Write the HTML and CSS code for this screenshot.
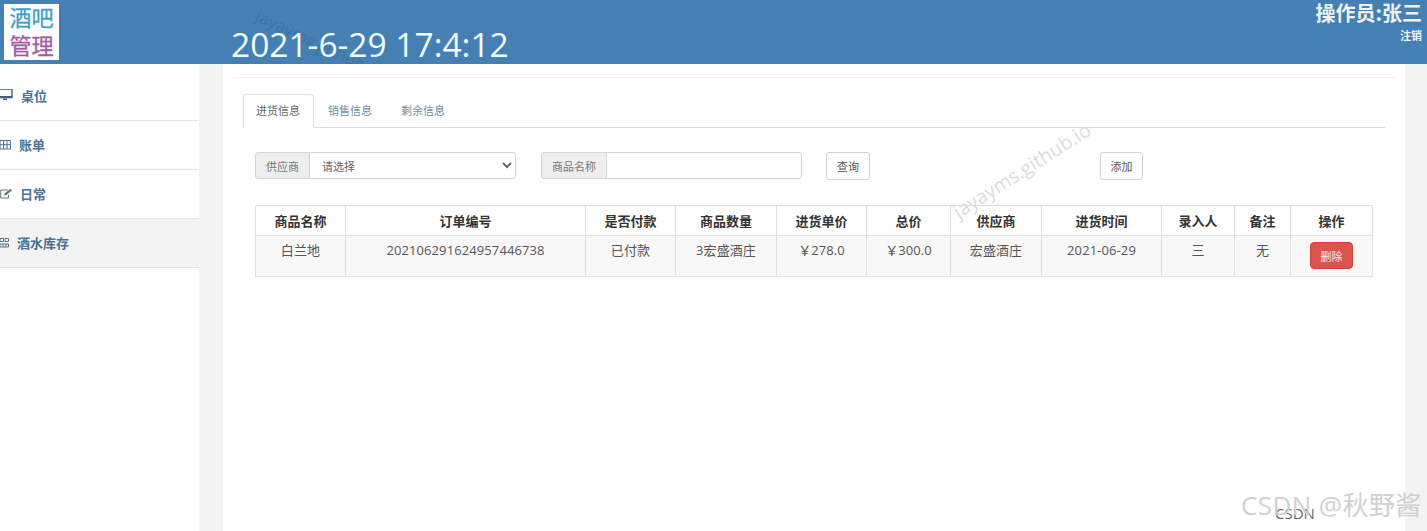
FILE: index.html
```html
<!DOCTYPE html>
<html lang="zh">
<head>
<meta charset="utf-8">
<title>酒吧管理</title>
<link rel="stylesheet" href="styles.css">
</head>
<body>
<header class="topbar">
  <div class="mark mark-top">jayayms.github.io</div>
  <div class="logo"><span class="logo-a">酒吧</span><span class="logo-b">管理</span></div>
  <div class="clock">2021-6-29 17:4:12</div>
  <div class="user">
    <div class="user-name">操作员:张三</div>
    <a class="logout">注销</a>
  </div>
</header>
<div class="body-row">
  <nav class="sidebar">
    <a class="nav-item nav-1">
      <svg class="nav-icon icon-desk" width="14" height="12" viewBox="0 0 14 12"><path d="M0 0h13v8.500h-13z" fill="none" stroke="#3f5f7c" stroke-width="1.400"/><path d="M0 7h13v2h-13zM4 9.500h4v1.500h-4z" fill="#3f5f7c"/></svg>
      <span>桌位</span></a>
    <a class="nav-item nav-2">
      <svg class="nav-icon" width="11" height="10" viewBox="0 0 11 10"><path d="M0 .5h10.500v8.500h-10.500zM0 4.700h10.500M3.500 .5v8.500M7 .5v8.500" fill="none" stroke="#51718f" stroke-width="1"/></svg>
      <span>账单</span></a>
    <a class="nav-item nav-3">
      <svg class="nav-icon" width="13" height="11" viewBox="0 0 13 11"><path d="M8 2H.7v8h7.800V7" fill="none" stroke="#5f7488" stroke-width="1"/><path d="M4 7.500l.6-2L10.500.7l1.600 1.500-5.700 4.800z" fill="#5f7488"/></svg>
      <span>日常</span></a>
    <a class="nav-item nav-4 active">
      <svg class="nav-icon" width="9" height="10" viewBox="0 0 9 10"><path d="M0 .5h3.500v3h-3.500zM5 .5h3.500v3h-3.500zM0 6h8.500v3h-8.500zM3 6v3M6 6v3" fill="none" stroke="#5f7488" stroke-width="1"/></svg>
      <span>酒水库存</span></a>
  </nav>
  <main class="content">
    <hr class="rule">
    <div class="pane">
      <ul class="tabs">
        <li class="tab current">进货信息</li>
        <li class="tab">销售信息</li>
        <li class="tab">剩余信息</li>
      </ul>
      <div class="filters">
        <div class="group group-supplier">
          <span class="addon addon-supplier">供应商</span>
          <select class="field select-field"><option>请选择</option></select>
        </div>
        <div class="group group-name">
          <span class="addon addon-name">商品名称</span>
          <input class="field" type="text">
        </div>
        <button class="btn btn-query" type="button">查询</button>
        <button class="btn btn-add" type="button">添加</button>
      </div>
      <table class="grid">
        <colgroup>
          <col class="c90"><col class="c240"><col class="c90"><col class="c101"><col class="c90"><col class="c84"><col class="c91"><col class="c120"><col class="c73"><col class="c56"><col class="c83">
        </colgroup>
        <thead>
          <tr><th>商品名称</th><th>订单编号</th><th>是否付款</th><th>商品数量</th><th>进货单价</th><th>总价</th><th>供应商</th><th>进货时间</th><th>录入人</th><th>备注</th><th>操作</th></tr>
        </thead>
        <tbody>
          <tr><td>白兰地</td><td>202106291624957446738</td><td>已付款</td><td>3宏盛酒庄</td><td>￥278.0</td><td>￥300.0</td><td>宏盛酒庄</td><td>2021-06-29</td><td>三</td><td>无</td><td class="cell-action"><button class="btn-del" type="button">删除</button></td></tr>
        </tbody>
      </table>
    </div>
  </main>
  <div class="right-gutter"></div>
</div>
<div class="mark mark-mid">jayayms.github.io</div>
<div class="csdn-small">CSDN</div>
<div class="csdn-big">CSDN @秋野酱</div>
</body>
</html>
```
FILE: styles.css
```css
* { box-sizing: border-box; }
html, body { margin: 0; height: 531px; overflow: hidden; }
body {
  position: relative;
  background: #f3f3f4;
  font-family: "Open Sans", "Noto Sans CJK SC", sans-serif;
  color: #444;
}
.topbar {
  position: relative;
  height: 64px;
  overflow: hidden;
  background: #4580b4;
  display: flex;
  align-items: flex-start;
  color: #fff;
}
.logo {
  width: 55px;
  height: 56px;
  margin: 4px 0 0 4px;
  background: #fdfdfd;
  display: flex;
  flex-direction: column;
  align-items: center;
  gap: 4px;
  font-family: "Noto Sans CJK SC", sans-serif;
  font-size: 22px;
  line-height: 24px;
  -webkit-text-stroke: .3px currentColor;
}
.logo-a { color: #3d9fc4; }
.logo-b { color: #a25ba6; }
.clock {
  position: relative;
  margin: 22px 0 0 172px;
  font-size: 33.500px;
  line-height: 44px;
  color: #f4fbfd;
  white-space: nowrap;
}
.user {
  margin-left: auto;
  padding: 1px 5px 0 0;
  text-align: right;
  font-family: "Noto Sans CJK SC", sans-serif;
  font-weight: 700;
}
.user-name { font-size: 20px; line-height: 24px; color: #eef2f4; }
.logout { display: block; font-size: 11px; line-height: 16px; margin-top: 2px; color: #f2f6f8; }
.body-row { display: flex; height: 467px; }
.sidebar { width: 199px; height: 467px; background: #fff; }
.nav-item {
  height: 49px;
  padding-bottom: 1px;
  display: flex;
  align-items: center;
  border-bottom: 1px solid #e3e3e3;
  color: #4b7093;
  font-family: "Noto Sans CJK SC", sans-serif;
  font-size: 13px;
  font-weight: 700;
  overflow: hidden;
}
.nav-item.active { background: #f3f3f3; }
.nav-icon { flex: none; }
.nav-1 { height: 57px; padding-top: 6px; padding-bottom: 0; }
.icon-desk { margin-left: -1px; margin-right: 8px; }
.nav-2 .nav-icon { margin-left: 0; margin-right: 8px; }
.nav-3 .nav-icon { margin-left: 0; margin-right: 7px; }
.nav-4 .nav-icon { margin-left: 0; margin-right: 8px; }
.content {
  width: 1182px;
  margin-left: 24px;
  background: #fff;
  padding: 13px 8px 0 10px;
}
.rule { margin: 0; border: 0; border-top: 1px solid #eef3ea; }
.pane { padding: 16px 12px 0 10px; }
.tabs {
  list-style: none;
  margin: 0;
  padding: 0;
  height: 34px;
  display: flex;
  border-bottom: 1px solid #dcdcdc;
}
.tab {
  height: 34px;
  width: 71px;
  padding: 7px 1px 0 0;
  text-align: center;
  font-family: "Noto Sans CJK SC", sans-serif;
  font-size: 11px;
  line-height: 16px;
  color: #6b8fa8;
  border: 1px solid transparent;
}
.tab + .tab { width: auto; padding: 7px 13px 0; }
.tab + .tab:last-child { padding-left: 14px; }
.tab.current {
  color: #666;
  background: #fff;
  border-color: #e0e0e0 #e0e0e0 #fff;
  border-radius: 3px 3px 0 0;
}
.filters {
  display: flex;
  align-items: flex-start;
  margin: 24px 12px 0 12px;
  height: 53px;
}
.group { display: flex; height: 27px; }
.group-supplier { width: 261px; }
.group-name { width: 261px; margin-left: 25px; }
.addon {
  flex: none;
  display: flex;
  align-items: center;
  justify-content: center;
  background: #eee;
  border: 1px solid #d4d4d4;
  border-radius: 3px 0 0 3px;
  font-family: "Noto Sans CJK SC", sans-serif;
  font-size: 11px;
  color: #777;
}
.addon-supplier { width: 55px; }
.addon-name { width: 66px; }
.field {
  flex: 1;
  min-width: 0;
  height: 27px;
  margin-left: -1px;
  border: 1px solid #d4d4d4;
  border-radius: 0 3px 3px 0;
  background: #fff;
  font-family: "Noto Sans CJK SC", sans-serif;
  font-size: 11px;
  color: #666;
  padding: 0 10px;
}
.select-field { padding: 0 8px; }
.btn {
  height: 28px;
  background: #fff;
  border: 1px solid #d2d2d2;
  border-radius: 3px;
  font-family: "Noto Sans CJK SC", sans-serif;
  font-size: 11px;
  color: #555;
  padding: 0;
}
.btn-query { width: 44px; margin-left: 24px; }
.btn-add { width: 43px; margin-left: 230px; }
.grid {
  margin-left: 12px;
  width: 1117px;
  table-layout: fixed;
  border-collapse: collapse;
  font-family: "Open Sans", "Noto Sans CJK SC", sans-serif;
  font-size: 13px;
  color: #555;
}
.c90 { width: 90px; }
.c240 { width: 240px; }
.c101 { width: 101px; }
.c84 { width: 84px; }
.c91 { width: 91px; }
.c120 { width: 120px; }
.c73 { width: 73px; }
.c56 { width: 56px; }
.c83 { width: 82px; }
.grid th, .grid td { border: 1px solid #e0e0e0; text-align: center; padding: 0; }
.grid th { height: 30px; color: #333; font-weight: 700; background: #fff; }
.grid td { height: 41px; background: #f8f8f8; vertical-align: top; padding-top: 4px; line-height: 20px; letter-spacing: .1px; }
.grid td.cell-action { padding-top: 6px; }
.btn-del {
  display: block;
  width: 43px;
  height: 27px;
  margin: 0 auto;
  padding: 0;
  background: #d9534f;
  border: 1px solid #d43f3a;
  border-radius: 4px;
  color: #fdeaea;
  font-family: "Noto Sans CJK SC", sans-serif;
  font-size: 11px;
}
.right-gutter { flex: 1; }
.mark {
  position: absolute;
  font-family: "Open Sans", sans-serif;
  white-space: nowrap;
}
.mark-top { left: 252px; top: 2px; transform: rotate(25deg); transform-origin: left bottom; color: rgba(40, 80, 120, .28); font-size: 17px; }
.mark-mid { left: 962px; top: 197px; transform: rotate(-32.500deg); transform-origin: left bottom; font-size: 19.500px; color: #dcdcdc; }
.csdn-small {
  position: absolute;
  left: 1275px;
  top: 503px;
  font-family: "Open Sans", sans-serif;
  font-size: 15px;
  color: #666;
}
.csdn-big {
  position: absolute;
  left: 1241px;
  top: 486px;
  font-family: "Open Sans", "Noto Sans CJK SC", sans-serif;
  font-size: 26px;
  letter-spacing: .4px;
  line-height: 38px;
  color: #d0d0d0;
  white-space: nowrap;
}
```
